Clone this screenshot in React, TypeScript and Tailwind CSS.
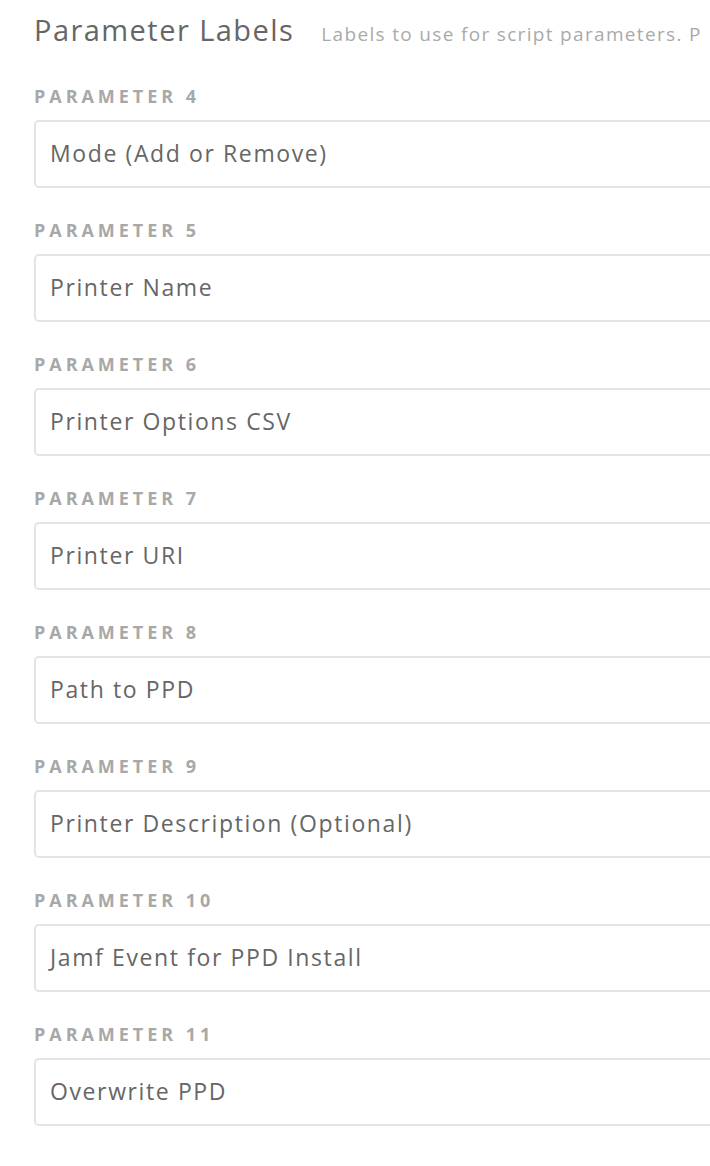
import React from "react";

const params = [
  { n: 4, v: "Mode (Add or Remove)" },
  { n: 5, v: "Printer Name" },
  { n: 6, v: "Printer Options CSV" },
  { n: 7, v: "Printer URI" },
  { n: 8, v: "Path to PPD" },
  { n: 9, v: "Printer Description (Optional)" },
  { n: 10, v: "Jamf Event for PPD Install" },
  { n: 11, v: "Overwrite PPD" },
];

export default function App() {
  return (
    <div
      className="w-[710px] min-h-[1166px] bg-white overflow-hidden pl-[34px]"
      style={{ fontFamily: "'Open Sans', Lato, sans-serif" }}
    >
      <div className="flex items-baseline h-[40px] mt-[10px] whitespace-nowrap overflow-hidden">
        <span className="text-[29px] text-[#666666] leading-[40px] tracking-[0.05em]">Parameter Labels</span>
        <span className="ml-[27px] text-[19px] text-[#aaaaaa] tracking-[0.07em]">
          Labels to use for script parameters. P
        </span>
      </div>
      <div className="mt-[37px] flex flex-col gap-[33px]">
        {params.map((p) => (
          <div key={p.n} className="flex flex-col">
            <div className="h-[18px] leading-[18px] text-[18px] font-bold tracking-[0.22em] text-[#a8a8a8] uppercase whitespace-nowrap">
              Parameter {p.n}
            </div>
            <div className="mt-[15px] w-[900px] h-[68px] border-2 border-[#e1e4e8] rounded-[5px] flex items-center pl-[14px] pb-[2px]">
              <span className="text-[23px] text-[#666666] tracking-[0.07em]">{p.v}</span>
            </div>
          </div>
        ))}
      </div>
    </div>
  );
}
